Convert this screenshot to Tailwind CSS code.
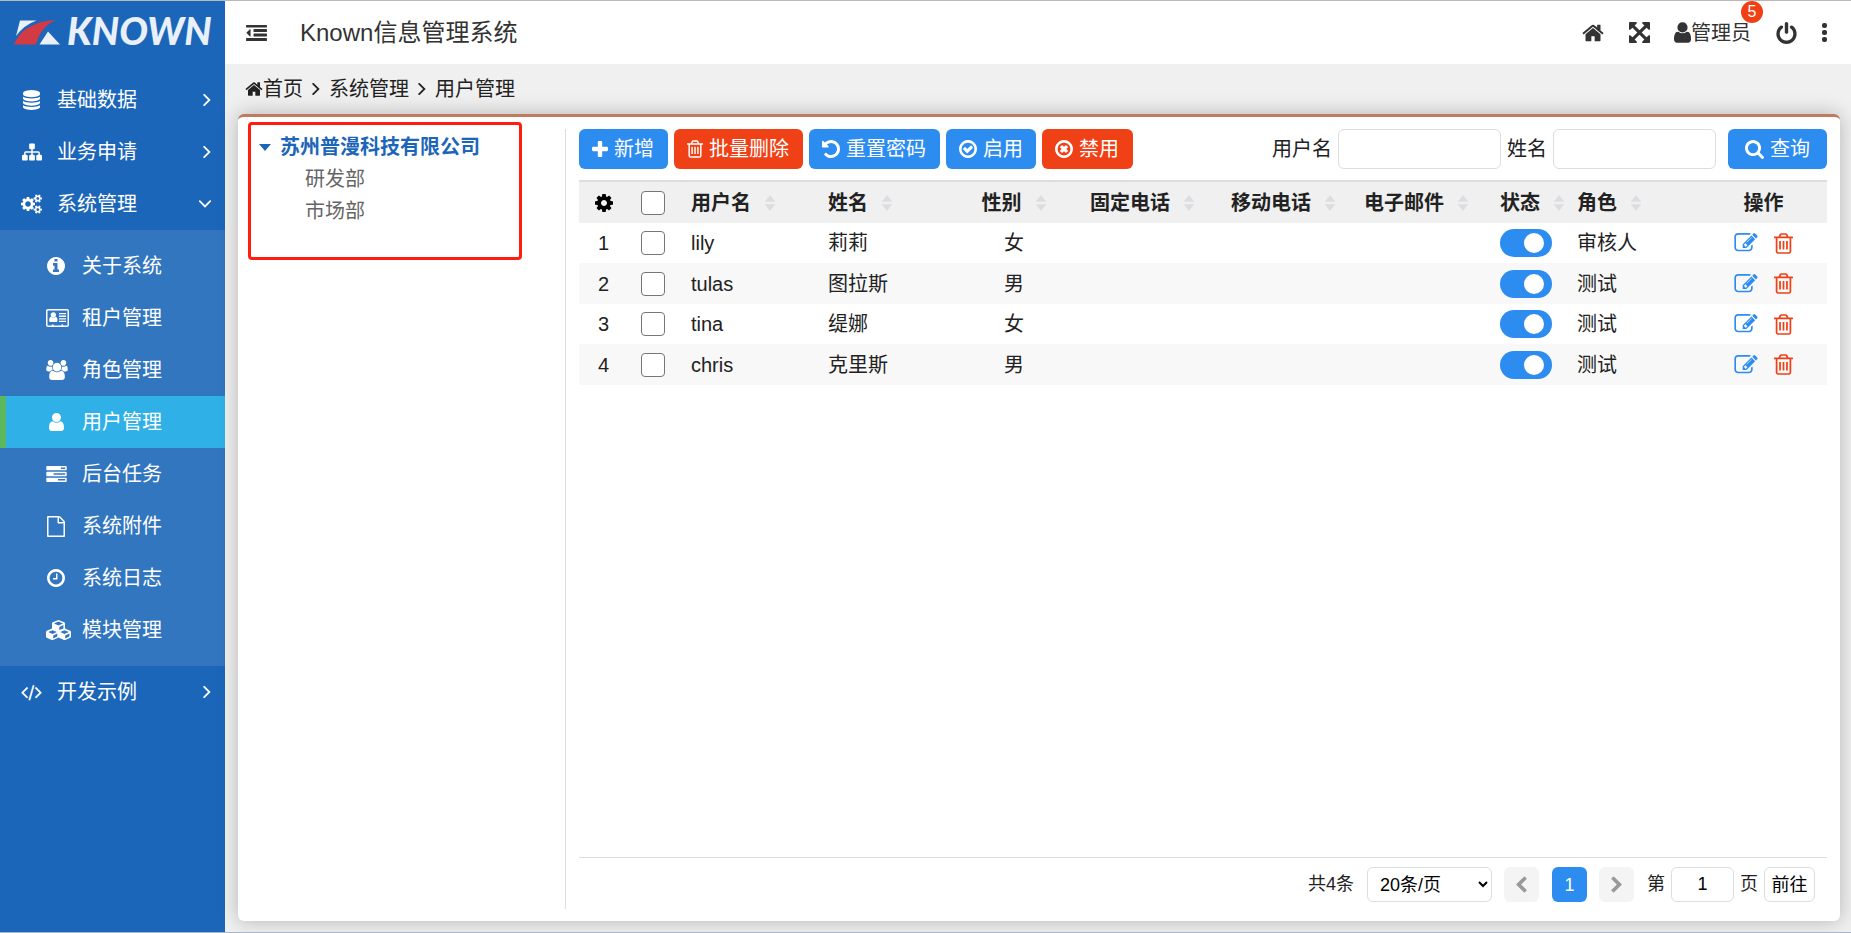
<!DOCTYPE html>
<html lang="zh-CN">
<head>
<meta charset="utf-8">
<title>Known信息管理系统</title>
<script src="https://cdn.jsdelivr.net/npm/@tailwindcss/browser@4"></script>
</head>
<body class="flex h-screen overflow-hidden border-t border-b border-t-[#b9b9b9] border-b-[#a9b6c6] bg-[#f0f0f0] font-['Liberation_Sans','Noto_Sans_CJK_SC',sans-serif] text-xl text-[#222]">

<svg class="hidden" aria-hidden="true">
  <symbol id="home" viewBox="64 128 1664 1536"><path d="M1472 992v480q0 26-19 45t-45 19h-384v-384h-256v384h-384q-26 0-45-19t-19-45v-480q0-1 .5-3t.5-3l575-474 575 474q1 2 1 6zm223-69l-62 74q-8 9-21 11h-3q-13 0-21-7l-692-577-692 577q-12 8-24 7-13-2-21-11l-62-74q-8-10-7-23.5t11-21.5l719-599q32-26 76-26t76 26l244 204v-195q0-14 9-23t23-9h192q14 0 23 9t9 23v408l219 182q10 8 11 21.5t-7 23.5z"/></symbol>
  <symbol id="expand" viewBox="128 128 1536 1536"><path d="M1411 541l-355 355 355 355 144-144q29-31 70-14 39 17 39 59v448q0 26-19 45t-45 19h-448q-42 0-59-40-17-39 14-69l144-144-355-355-355 355 144 144q31 30 14 69-17 40-59 40h-448q-26 0-45-19t-19-45v-448q0-42 40-59 39-17 69 14l144 144 355-355-355-355-144 144q-19 19-45 19-12 0-24-5-40-17-40-59v-448q0-26 19-45t45-19h448q42 0 59 40 17 39-14 69l-144 144 355 355 355-355-144-144q-31-30-14-69 17-40 59-40h448q26 0 45 19t19 45v448q0 42-39 59-13 5-25 5-26 0-45-19z"/></symbol>
  <symbol id="user" viewBox="256 128 1280 1536"><path d="M1536 1399q0 109-62.5 187t-150.5 78h-854q-88 0-150.5-78t-62.5-187q0-85 8.5-160.5t31.5-152 58.5-131 94-89 134.5-34.5q131 128 313 128t313-128q76 0 134.5 34.5t94 89 58.5 131 31.5 152 8.5 160.5zm-256-887q0 159-112.5 271.5t-271.5 112.5-271.5-112.5-112.5-271.5 112.5-271.5 271.5-112.5 271.5 112.5 112.5 271.5z"/></symbol>
  <symbol id="power" viewBox="128 0 1536 1664"><path d="M1664 896q0 156-61 298t-164 245-245 164-298 61-298-61-245-164-164-245-61-298q0-182 80.5-343t226.5-270q43-32 95.5-25t83.5 50q32 42 24.5 94.5t-49.5 84.5q-98 74-151.5 181t-53.5 228q0 104 40.5 198.5t109.5 163.5 163.5 109.5 198.5 40.5 198.5-40.5 163.5-109.5 109.5-163.5 40.5-198.5q0-121-53.5-228t-151.5-181q-42-32-49.5-84.5t24.5-94.5q31-43 84-50t95 25q146 109 226.5 270t80.5 343zm-640-768v640q0 52-38 90t-90 38-90-38-38-90v-640q0-52 38-90t90-38 90 38 38 90z"/></symbol>
  <symbol id="outdent" viewBox="0 160 1792 1376"><path d="M384 544v576q0 13-9.5 22.5t-22.5 9.5q-14 0-23-9l-288-288q-9-9-9-23t9-23l288-288q9-9 23-9 13 0 22.5 9.5t9.5 22.5zM32 1280h1728q32 0 32 32v192q0 32-32 32h-1728q-32 0-32-32v-192q0-32 32-32zM672 896h1088q32 0 32 32v192q0 32-32 32h-1088q-32 0-32-32v-192q0-32 32-32zM672 512h1088q32 0 32 32v192q0 32-32 32h-1088q-32 0-32-32v-192q0-32 32-32zM32 160h1728q32 0 32 32v160q0 32-32 32h-1728q-32 0-32-32v-160q0-32 32-32z"/></symbol>
  <symbol id="database" viewBox="128 0 1536 1792"><path d="M896 768q237 0 443-43t325-127v170q0 69-103 128t-280 93.5-385 34.5-385-34.5-280-93.5-103-128v-170q119 84 325 127t443 43zm0 768q237 0 443-43t325-127v170q0 69-103 128t-280 93.5-385 34.5-385-34.5-280-93.5-103-128v-170q119 84 325 127t443 43zm0-384q237 0 443-43t325-127v170q0 69-103 128t-280 93.5-385 34.5-385-34.5-280-93.5-103-128v-170q119 84 325 127t443 43zm0-1152q208 0 385 34.5t280 93.5 103 128v128q0 69-103 128t-280 93.5-385 34.5-385-34.5-280-93.5-103-128v-128q0-69 103-128t280-93.5 385-34.5z"/></symbol>
  <symbol id="sitemap" viewBox="0 0 1792 1792"><path d="M1792 1248v320q0 40-28 68t-68 28h-320q-40 0-68-28t-28-68v-320q0-40 28-68t68-28h96v-192h-512v192h96q40 0 68 28t28 68v320q0 40-28 68t-68 28h-320q-40 0-68-28t-28-68v-320q0-40 28-68t68-28h96v-192h-512v192h96q40 0 68 28t28 68v320q0 40-28 68t-68 28h-320q-40 0-68-28t-28-68v-320q0-40 28-68t68-28h96v-192q0-52 38-90t90-38h512v-192h-96q-40 0-68-28t-28-68v-320q0-40 28-68t68-28h320q40 0 68 28t28 68v320q0 40-28 68t-68 28h-96v192h512q52 0 90 38t38 90v192h96q40 0 68 28t28 68z"/></symbol>
  <symbol id="cogs" viewBox="0 0 1920 1792"><path d="M896 896q0-106-75-181t-181-75-181 75-75 181 75 181 181 75 181-75 75-181zm768 512q0-52-38-90t-90-38-90 38-38 90q0 53 37.5 90.5t90.5 37.5 90.5-37.5 37.5-90.5zm0-1024q0-52-38-90t-90-38-90 38-38 90q0 53 37.5 90.5t90.5 37.5 90.5-37.5 37.5-90.5zm-384 421v185q0 10-7 19.5t-16 10.5l-155 24q-11 35-32 76 34 48 90 115 7 11 7 20 0 12-7 19-23 30-82.5 89.5t-78.5 59.5q-11 0-21-7l-115-90q-37 19-77 31-11 108-23 155-7 24-30 24h-186q-11 0-20-7.5t-10-17.5l-23-153q-34-10-75-31l-118 89q-7 7-20 7-11 0-21-8-144-133-144-160 0-9 7-19 10-14 41-53t47-61q-23-44-35-82l-152-24q-10-1-17-9.5t-7-19.5v-185q0-10 7-19.5t16-10.5l155-24q11-35 32-76-34-48-90-115-7-11-7-20 0-12 7-20 22-30 82-89t79-59q11 0 21 7l115 90q34-18 77-32 11-108 23-154 7-24 30-24h186q11 0 20 7.5t10 17.5l23 153q34 10 75 31l118-89q8-7 20-7 11 0 21 8 144 133 144 160 0 8-7 19-12 16-42 54t-45 60q23 48 34 82l152 23q10 2 17 10.5t7 19.5zm640 533v140q0 16-149 31-12 27-30 52 51 113 51 138 0 4-4 7-122 71-124 71-8 0-46-47t-52-68q-20 2-30 2t-30-2q-14 21-52 68t-46 47q-2 0-124-71-4-3-4-7 0-25 51-138-18-25-30-52-149-15-149-31v-140q0-16 149-31 13-29 30-52-51-113-51-138 0-4 4-7 4-2 35-20t59-34 30-16q8 0 46 46.5t52 67.5q20-2 30-2t30 2q51-71 92-112l6-2q4 0 124 70 4 3 4 7 0 25-51 138 17 23 30 52 149 15 149 31zm0-1024v140q0 16-149 31-12 27-30 52 51 113 51 138 0 4-4 7-122 71-124 71-8 0-46-47t-52-68q-20 2-30 2t-30-2q-14 21-52 68t-46 47q-2 0-124-71-4-3-4-7 0-25 51-138-18-25-30-52-149-15-149-31v-140q0-16 149-31 13-29 30-52-51-113-51-138 0-4 4-7 4-2 35-20t59-34 30-16q8 0 46 46.5t52 67.5q20-2 30-2t30 2q51-71 92-112l6-2q4 0 124 70 4 3 4 7 0 25-51 138 17 23 30 52 149 15 149 31z"/></symbol>
  <symbol id="info" viewBox="128 128 1536 1536"><path d="M1152 1376v-160q0-14-9-23t-23-9h-96v-512q0-14-9-23t-23-9h-320q-14 0-23 9t-9 23v160q0 14 9 23t23 9h96v320h-96q-14 0-23 9t-9 23v160q0 14 9 23t23 9h448q14 0 23-9t9-23zm-128-896v-160q0-14-9-23t-23-9h-192q-14 0-23 9t-9 23v160q0 14 9 23t23 9h192q14 0 23-9t9-23zm640 416q0 209-103 385.5t-279.5 279.5-385.5 103-385.5-103-279.5-279.5-103-385.5 103-385.5 279.5-279.5 385.5-103 385.5 103 279.5 279.5 103 385.5z"/></symbol>
  <symbol id="idcard" viewBox="0 0 23 18"><path fill-rule="evenodd" d="M2 0h19a2 2 0 0 1 2 2v14a2 2 0 0 1-2 2H2a2 2 0 0 1-2-2V2a2 2 0 0 1 2-2zM1.500 2v14.200q0 .3.300.3H5.800v-1h1.800v1h7.800v-1h1.800v1h4q.3 0 .3-.3V2q0-.5-.5-.5H2q-.5 0-.5.5z"/><circle cx="7.300" cy="5.800" r="2.600"/><path d="M5.200 7.700q2.100 1.700 4.200 0 2.100.3 2.100 3.900 0 1.500-1.200 1.500H4.300q-1.200 0-1.200-1.500 0-3.600 2.100-3.900zM13 4h7v1.300h-7zM13 6.600h7v1.300h-7zM13 9.200h7v1.300h-7zM13 11.800h7v1.300h-7z"/></symbol>
  <symbol id="users" viewBox="-64 0 1920 1792"><path d="M529 896q-162 5-265 128h-134q-82 0-138-40.5t-56-118.5q0-353 124-353 6 0 43.5 21t97.5 42.500 119 21.500q67 0 133-23-5 37-5 66 0 139 81 256zm1071 637q0 120-73 189.500t-194 69.500h-874q-121 0-194-69.500t-73-189.500q0-53 3.500-103.500t14-109 26.500-108.500 43-97.500 62-81 85.500-53.500 111.500-20q10 0 43 21.500t73 48 107 48 135 21.500 135-21.500 107-48 73-48 43-21.500q61 0 111.500 20t85.500 53.500 62 81 43 97.500 26.500 108.500 14 109 3.500 103.500zm-1024-1277q0 106-75 181t-181 75-181-75-75-181 75-181 181-75 181 75 75 181zm704 384q0 159-112.500 271.500t-271.500 112.500-271.500-112.500-112.500-271.500 112.500-271.500 271.500-112.500 271.500 112.500 112.500 271.500zm576 225q0 78-56 118.500t-138 40.500h-134q-103-123-265-128 81-117 81-256 0-29-5-66 66 23 133 23 59 0 119-21.500t97.500-42.500 43.500-21q124 0 124 353zm-128-609q0 106-75 181t-181 75-181-75-75-181 75-181 181-75 181 75 75 181z"/></symbol>
  <symbol id="tasks" viewBox="0 128 1792 1408"><path fill-rule="evenodd" d="M1024 1408h640v-128h-640v128zm-384-512h1024v-128h-1024v128zm640-512h384v-128h-384v128zm512 832v256q0 26-19 45t-45 19h-1664q-26 0-45-19t-19-45v-256q0-26 19-45t45-19h1664q26 0 45 19t19 45zm0-512v256q0 26-19 45t-45 19h-1664q-26 0-45-19t-19-45v-256q0-26 19-45t45-19h1664q26 0 45 19t19 45zm0-512v256q0 26-19 45t-45 19h-1664q-26 0-45-19t-19-45v-256q0-26 19-45t45-19h1664q26 0 45 19t19 45z"/></symbol>
  <symbol id="file" viewBox="128 96 1536 1792"><path d="M1596 476q28 28 48 76t20 88v1152q0 40-28 68t-68 28h-1344q-40 0-68-28t-28-68v-1600q0-40 28-68t68-28h896q40 0 88 20t76 48zm-444-244v376h376q-10-29-22-41l-313-313q-12-12-41-22zm384 1528v-1024h-416q-40 0-68-28t-28-68v-416h-768v1536h1280z"/></symbol>
  <symbol id="clock" viewBox="128 128 1536 1536"><path d="M1024 544v448q0 14-9 23t-23 9h-320q-14 0-23-9t-9-23v-64q0-14 9-23t23-9h224v-352q0-14 9-23t23-9h64q14 0 23 9t9 23zm416 352q0-148-73-273t-198-198-273-73-273 73-198 198-73 273 73 273 198 198 273 73 273-73 198-198 73-273zm224 0q0 209-103 385.5t-279.5 279.5-385.5 103-385.5-103-279.5-279.5-103-385.5 103-385.5 279.5-279.5 385.5-103 385.5 103 279.5 279.5 103 385.5z"/></symbol>
  <symbol id="cubes" viewBox="0 0 25 20"><path fill-rule="evenodd" d="M12.500 0l5.700 2.300q.8.400.8 1.300v5l5.200 2.200q.8.400.8 1.200v4.500q0 .8-.7 1.200l-5.100 2.300q-.6.200-1.200 0l-5.500-2.400-5.500 2.400q-.6.200-1.200 0l-5.100-2.300q-.7-.4-.7-1.200V12q0-.8.800-1.200L6 8.600v-5q0-.9.800-1.300zM12.500 1.600L8 3.500l4.500 1.900L17 3.500zM13.300 6.900v3.200l4.100-1.700V5zM6.500 10.300L2.200 12.100l4.300 1.800 4.300-1.800zM7.200 15.400v3l4.100-1.800v-3zM18.500 10.300l-4.300 1.800 4.300 1.800 4.300-1.800zM19.200 15.400v3l4.200-1.800v-3z"/></symbol>
  <symbol id="code" viewBox="0 0 1920 1792"><path d="M617 1399l-50 50q-10 10-23 10t-23-10l-466-466q-10-10-10-23t10-23l466-466q10-10 23-10t23 10l50 50q10 10 10 23t-10 23l-393 393 393 393q10 10 10 23t-10 23zm591-1067l-373 1291q-4 13-15.500 19.500t-23.500 2.500l-62-17q-13-4-19.500-15.500t-2.500-24.500l373-1291q4-13 15.500-19.500t23.500-2.500l62 17q13 4 19.500 15.500t2.500 24.500zm657 651l-466 466q-10 10-23 10t-23-10l-50-50q-10-10-10-23t10-23l393-393-393-393q-10-10-10-23t10-23l50-50q10-10 23-10t23 10l466 466q10 10 10 23t-10 23z"/></symbol>
  <symbol id="plus" viewBox="192 128 1408 1408"><path d="M1600 736v192q0 40-28 68t-68 28h-416v416q0 40-28 68t-68 28h-192q-40 0-68-28t-28-68v-416h-416q-40 0-68-28t-28-68v-192q0-40 28-68t68-28h416v-416q0-40 28-68t68-28h192q40 0 68 28t28 68v416h416q40 0 68 28t28 68z"/></symbol>
  <symbol id="trash" viewBox="192 128 1408 1536"><path d="M704 736v576q0 14-9 23t-23 9h-64q-14 0-23-9t-9-23v-576q0-14 9-23t23-9h64q14 0 23 9t9 23zm256 0v576q0 14-9 23t-23 9h-64q-14 0-23-9t-9-23v-576q0-14 9-23t23-9h64q14 0 23 9t9 23zm256 0v576q0 14-9 23t-23 9h-64q-14 0-23-9t-9-23v-576q0-14 9-23t23-9h64q14 0 23 9t9 23zm128 724v-948h-896v948q0 22 7 40.5t14.5 27 10.5 8.5h832q3 0 10.5-8.5t14.5-27 7-40.5zm-672-1076h448l-48-117q-7-9-17-11h-317q-10 2-17 11zm928 32v64q0 14-9 23t-23 9h-96v948q0 83-47 143.5t-113 60.5h-832q-66 0-113-58.5t-47-141.5v-952h-96q-14 0-23-9t-9-23v-64q0-14 9-23t23-9h309l70-167q15-37 54-63t79-26h320q40 0 79 26t54 63l70 167h309q14 0 23 9t9 23z"/></symbol>
  <symbol id="undo" viewBox="128 128 1536 1536"><path d="M1664 896q0 156-61 298t-164 245-245 164-298 61q-172 0-327-72.500t-264-204.500q-7-10-6.500-22.500t8.500-20.500l137-138q10-9 25-9 16 2 23 12 73 95 179 147t225 52q104 0 198.500-40.500t163.500-109.500 109.500-163.500 40.500-198.500-40.500-198.500-109.500-163.500-163.500-109.500-198.500-40.500q-98 0-188 35.500t-160 101.500l137 138q31 30 14 69-17 40-59 40h-448q-26 0-45-19t-19-45v-448q0-42 40-59 39-17 69 14l130 129q107-101 244.500-156.500t284.500-55.500q156 0 298 61t245 164 164 245 61 298z"/></symbol>
  <symbol id="check" viewBox="128 128 1536 1536"><path d="M1299 813l-422 422q-19 19-45 19t-45-19l-294-294q-19-19-19-45t19-45l102-102q19-19 45-19t45 19l147 147 275-275q19-19 45-19t45 19l102 102q19 19 19 45t-19 45zm141 83q0-148-73-273t-198-198-273-73-273 73-198 198-73 273 73 273 198 198 273 73 273-73 198-198 73-273zm224 0q0 209-103 385.5t-279.5 279.5-385.5 103-385.5-103-279.5-279.5-103-385.5 103-385.5 279.5-279.5 385.5-103 385.5 103 279.5 279.5 103 385.5z"/></symbol>
  <symbol id="ban" viewBox="128 128 1536 1536"><path d="M1225 1079l-146 146q-10 10-23 10t-23-10l-137-137-137 137q-10 10-23 10t-23-10l-146-146q-10-10-10-23t10-23l137-137-137-137q-10-10-10-23t10-23l146-146q10-10 23-10t23 10l137 137 137-137q10-10 23-10t23 10l146 146q10 10 10 23t-10 23l-137 137 137 137q10 10 10 23t-10 23zm215-183q0-148-73-273t-198-198-273-73-273 73-198 198-73 273 73 273 198 198 273 73 273-73 198-198 73-273zm224 0q0 209-103 385.5t-279.5 279.5-385.5 103-385.5-103-279.5-279.5-103-385.5 103-385.5 279.5-279.5 385.5-103 385.5 103 279.5 279.5 103 385.5z"/></symbol>
  <symbol id="search" viewBox="64 128 1664 1664"><path d="M1216 832q0-185-131.5-316.5t-316.5-131.5-316.5 131.5-131.5 316.5 131.5 316.5 316.5 131.5 316.5-131.5 131.5-316.5zm512 832q0 52-38 90t-90 38q-54 0-90-38l-343-342q-179 124-399 124-143 0-273.5-55.5t-225-150-150-225-55.5-273.5 55.5-273.5 150-225 225-150 273.5-55.5 273.5 55.5 225 150 150 225 55.5 273.5q0 220-124 399l343 343q37 37 37 90z"/></symbol>
  <symbol id="cog" viewBox="128 128 1536 1536"><path d="M1152 896q0-106-75-181t-181-75-181 75-75 181 75 181 181 75 181-75 75-181zm512-109v222q0 12-8 23t-20 13l-185 28q-19 54-39 91 35 50 107 138 10 12 10 25t-9 23q-27 37-99 108t-94 71q-12 0-26-9l-138-108q-44 23-91 38-16 136-29 186-7 28-36 28h-222q-14 0-24.5-8.5t-11.500-21.500l-28-184q-49-16-90-37l-141 107q-10 9-25 9-14 0-25-11-126-114-165-168-7-10-7-23 0-12 8-23 15-21 51-66.500t54-70.500q-27-50-41-99l-183-27q-13-2-21-12.500t-8-23.500v-222q0-12 8-23t19-13l186-28q14-46 39-92-40-57-107-138-10-12-10-24 0-10 9-23 26-36 98.500-107.500t94.500-71.500q13 0 26 10l138 107q44-23 91-38 16-136 29-186 7-28 36-28h222q14 0 24.500 8.500t11.500 21.500l28 184q49 16 90 37l142-107q9-9 24-9 13 0 25 10 129 119 165 170 7 8 7 22 0 12-8 23-15 21-51 66.500t-54 70.500q26 50 41 98l183 28q13 2 21 12.500t8 23.500z"/></symbol>
  <symbol id="edit" viewBox="0 128 1792 1536"><path d="M888 1184l116-116-152-152-116 116v56h96v96h56zm440-720q-16-16-33 1l-350 350q-17 17-1 33t33-1l350-350q17-17 1-33zm80 594v190q0 119-84.500 203.500t-203.500 84.500h-832q-119 0-203.500-84.500t-84.500-203.500v-832q0-119 84.500-203.500t203.500-84.500h832q63 0 117 25 15 7 18 23 3 17-9 29l-49 49q-14 14-32 8-23-6-45-6h-832q-66 0-113 47t-47 113v832q0 66 47 113t113 47h832q66 0 113-47t47-113v-126q0-13 9-22l64-64q15-15 35-7t20 29zm-96-738l288 288-672 672h-288v-288zm444 132l-92 92-288-288 92-92q28-28 68-28t68 28l152 152q28 28 28 68t-28 68z"/></symbol>
  <symbol id="prev" viewBox="380 0 1100 1664"><path d="M1427 301l-531 531 531 531q19 19 19 45t-19 45l-166 166q-19 19-45 19t-45-19l-742-742q-19-19-19-45t19-45l742-742q19-19 45-19t45 19l166 166q19 19 19 45t-19 45z"/></symbol>
  <symbol id="angle" viewBox="0 0 8 12"><path d="M1.200 .8l5.200 5.200-5.200 5.200" fill="none" stroke="currentColor" stroke-width="1.800" stroke-linecap="round"/></symbol>
  <symbol id="sort" viewBox="0 0 12 18"><path d="M6 0l6 7.500H0zM6 18l6-7.500H0z"/></symbol>
</svg>

<aside class="flex w-[225px] shrink-0 flex-col bg-[#1c66b9] text-white">
  <a href="#" class="flex h-[73px] items-start gap-1.5 pt-1.5 pl-3.5">
    <svg class="mt-3 h-[27px] w-[47px]" viewBox="0 0 47 27" aria-hidden="true">
      <path fill="#e9f0fa" d="M6 1.500h16.500Q10 6 2 17zM34 12.500l12 13H25.500z"/>
      <path fill="#d33a44" d="M0 25.500Q9 3 42 1 27 7 22 25.500z"/>
    </svg>
    <span class="font-['Lato'] text-[38px] leading-[46px] font-black text-[#e9f0fa] italic">KNOWN</span>
  </a>
  <nav class="flex flex-col">
    <a href="#" class="flex h-[52px] items-center gap-[15px] pr-3.5 pl-[21px]"><span class="flex w-[21px] justify-center"><svg class="h-5 w-[17px] fill-current"><use href="#database"/></svg></span><span class="flex-1">基础数据</span><svg class="h-3 w-2"><use href="#angle"/></svg></a>
    <a href="#" class="flex h-[52px] items-center gap-[15px] pr-3.5 pl-[21px]"><span class="flex w-[21px] justify-center"><svg class="size-5 fill-current"><use href="#sitemap"/></svg></span><span class="flex-1">业务申请</span><svg class="h-3 w-2"><use href="#angle"/></svg></a>
    <a href="#" class="flex h-[52px] items-center gap-[15px] pr-3.5 pl-[21px]"><span class="flex w-[21px] justify-center"><svg class="h-5 w-[21px] fill-current"><use href="#cogs"/></svg></span><span class="flex-1">系统管理</span><svg class="h-3 w-3 rotate-90"><use href="#angle"/></svg></a>
    <div class="flex flex-col bg-[#3176bf] py-2.5">
      <a href="#" class="flex h-[52px] items-center gap-4 pl-[46px]"><span class="flex w-5 justify-center"><svg class="size-[18px] shrink-0 fill-current"><use href="#info"/></svg></span>关于系统</a>
      <a href="#" class="flex h-[52px] items-center gap-4 pl-[46px]"><span class="flex w-5"><svg class="h-[18px] w-[23px] shrink-0 fill-current"><use href="#idcard"/></svg></span>租户管理</a>
      <a href="#" class="flex h-[52px] items-center gap-4 pl-[46px]"><span class="flex w-5"><svg class="h-5 w-[22px] shrink-0 fill-current"><use href="#users"/></svg></span>角色管理</a>
      <a href="#" class="flex h-[52px] items-center gap-4 border-l-6 border-[#5cb85c] bg-[#2fb1e8] pl-10" aria-current="page"><span class="flex w-5 justify-center"><svg class="h-[18px] w-[15px] shrink-0 fill-current"><use href="#user"/></svg></span>用户管理</a>
      <a href="#" class="flex h-[52px] items-center gap-4 pl-[46px]"><span class="flex w-5"><svg class="h-4 w-[21px] shrink-0 fill-current"><use href="#tasks"/></svg></span>后台任务</a>
      <a href="#" class="flex h-[52px] items-center gap-4 pl-[46px]"><span class="flex w-5 justify-center"><svg class="h-[21px] w-[18px] shrink-0 fill-current"><use href="#file"/></svg></span>系统附件</a>
      <a href="#" class="flex h-[52px] items-center gap-4 pl-[46px]"><span class="flex w-5 justify-center"><svg class="size-[18px] shrink-0 fill-current"><use href="#clock"/></svg></span>系统日志</a>
      <a href="#" class="flex h-[52px] items-center gap-4 pl-[46px]"><span class="flex w-5"><svg class="h-5 w-[25px] shrink-0 fill-current"><use href="#cubes"/></svg></span>模块管理</a>
    </div>
    <a href="#" class="flex h-[52px] items-center gap-[15px] pr-3.5 pl-[21px]"><span class="flex w-[21px] justify-center"><svg class="h-5 w-[21px] fill-current stroke-current stroke-[40]"><use href="#code"/></svg></span><span class="flex-1">开发示例</span><svg class="h-3 w-2"><use href="#angle"/></svg></a>
  </nav>
</aside>

<div class="flex min-w-0 flex-1 flex-col">
  <header class="flex h-[63px] shrink-0 items-center bg-white pr-6 pl-[21px] text-[#333]">
    <button aria-label="收起菜单"><svg class="h-4 w-[21px] fill-current"><use href="#outdent"/></svg></button>
    <h1 class="ml-[33px] flex-1 text-2xl">Known信息管理系统</h1>
    <div class="flex items-center">
      <a href="#" aria-label="首页"><svg class="h-5 w-[22px] fill-current"><use href="#home"/></svg></a>
      <button class="ml-[25px]" aria-label="全屏"><svg class="size-[21px] fill-current"><use href="#expand"/></svg></button>
      <a href="#" class="relative ml-6 flex items-center"><svg class="h-[21px] w-[17px] fill-current"><use href="#user"/></svg>管理员<span class="absolute -top-[18px] -right-3 flex size-[22px] items-center justify-center rounded-full bg-[#ef4016] text-base text-white">5</span></a>
      <button class="ml-[25px]" aria-label="退出"><svg class="h-[22px] w-[21px] fill-current"><use href="#power"/></svg></button>
      <button class="ml-[25px] flex flex-col gap-0.5" aria-label="更多"><span class="size-[5px] rounded-xs bg-current"></span><span class="size-[5px] rounded-xs bg-current"></span><span class="size-[5px] rounded-xs bg-current"></span></button>
    </div>
  </header>

  <nav class="flex h-[50px] shrink-0 items-center pl-5" aria-label="当前位置">
    <a href="#" class="flex items-center"><svg class="h-4 w-[18px] fill-current"><use href="#home"/></svg>首页</a>
    <svg class="mx-[9px] h-3 w-2"><use href="#angle"/></svg>
    <a href="#">系统管理</a>
    <svg class="mx-[9px] h-3 w-2"><use href="#angle"/></svg>
    <span>用户管理</span>
  </nav>

  <main class="mr-[11px] mb-[11px] ml-[13px] flex min-h-0 flex-1 rounded-md border-t-3 border-[#bf7a5f] bg-white pt-[5px] pr-[13px] shadow-[0_0_20px_rgba(0,0,0,0.25)]">
    <section class="w-[327px] shrink-0 pl-2.5">
      <div class="h-[138px] w-[274px] rounded-sm border-3 border-[#ff1d12] px-2 pt-1.5">
        <a href="#" class="flex h-8 items-center gap-[9px] font-bold text-[#1c66b9]"><svg class="h-[7px] w-3 fill-current" viewBox="0 0 12 7"><path d="M0 0h12l-6 7z"/></svg>苏州普漫科技有限公司</a>
        <a href="#" class="flex h-8 items-center pl-[46px] text-[#666]">研发部</a>
        <a href="#" class="flex h-8 items-center pl-[46px] text-[#666]">市场部</a>
      </div>
    </section>

    <section class="mt-[7px] mb-3 flex min-w-0 flex-1 flex-col border-l border-[#dcdde0] pl-[13px]">
      <div class="flex h-10 shrink-0 items-center gap-1.5 text-white">
        <button class="flex h-10 items-center gap-1.5 rounded-md bg-[#2d8cf0] pr-3.5 pl-[13px]"><svg class="size-4 fill-current"><use href="#plus"/></svg>新增</button>
        <button class="flex h-10 items-center gap-1.5 rounded-md bg-[#ef4016] pr-3.5 pl-[13px]"><svg class="h-[18px] w-4 fill-current"><use href="#trash"/></svg>批量删除</button>
        <button class="flex h-10 items-center gap-1.5 rounded-md bg-[#2d8cf0] pr-3.5 pl-[13px]"><svg class="size-[18px] fill-current"><use href="#undo"/></svg>重置密码</button>
        <button class="flex h-10 items-center gap-1.5 rounded-md bg-[#2d8cf0] px-[13px]"><svg class="size-[18px] fill-current"><use href="#check"/></svg>启用</button>
        <button class="flex h-10 items-center gap-1.5 rounded-md bg-[#ef4016] pr-3.5 pl-[13px]"><svg class="size-[18px] fill-current"><use href="#ban"/></svg>禁用</button>
        <form class="ml-auto flex items-center gap-1.5 text-[#222]">
          <label for="q-user">用户名</label>
          <input id="q-user" type="text" class="h-10 w-[163px] rounded-md border border-[#dcdde0] px-2">
          <label for="q-name">姓名</label>
          <input id="q-name" type="text" class="h-10 w-[163px] rounded-md border border-[#dcdde0] px-2">
          <button type="button" class="ml-1.5 flex h-10 items-center gap-1.5 rounded-md bg-[#2d8cf0] px-[17px] text-white"><svg class="size-[19px] fill-current"><use href="#search"/></svg>查询</button>
        </form>
      </div>

      <div class="mt-[11px] min-h-0 flex-1">
        <table class="w-full table-fixed border-t-2 border-[#dcdde0] text-left">
          <colgroup><col class="w-[49px]"><col class="w-[50px]"><col class="w-[142px]"><col class="w-[126px]"><col class="w-[136px]"><col class="w-[141px]"><col class="w-[133px]"><col class="w-[136px]"><col class="w-[77px]"><col class="w-[131px]"><col class="w-[127px]"></colgroup>
          <thead class="bg-[#f0f0f0]">
            <tr class="h-[42px] whitespace-nowrap">
              <th><button class="flex w-full justify-center text-black" aria-label="列设置"><svg class="size-[18px] fill-current"><use href="#cog"/></svg></button></th>
              <th><input type="checkbox" aria-label="全选" class="mx-auto block size-6 appearance-none rounded border border-[#767676] bg-white"></th>
              <th class="pl-[13px]"><span class="flex items-center gap-[13px]">用户名<svg class="h-4 w-3 fill-[#dcdde0]"><use href="#sort"/></svg></span></th>
              <th class="px-2"><span class="flex items-center gap-[13px]">姓名<svg class="h-4 w-3 fill-[#dcdde0]"><use href="#sort"/></svg></span></th>
              <th class="px-2"><span class="flex items-center justify-center gap-[13px]">性别<svg class="h-4 w-3 fill-[#dcdde0]"><use href="#sort"/></svg></span></th>
              <th class="px-2"><span class="flex items-center gap-[13px]">固定电话<svg class="h-4 w-3 fill-[#dcdde0]"><use href="#sort"/></svg></span></th>
              <th class="px-2"><span class="flex items-center gap-[13px]">移动电话<svg class="h-4 w-3 fill-[#dcdde0]"><use href="#sort"/></svg></span></th>
              <th class="px-2"><span class="flex items-center gap-[13px]">电子邮件<svg class="h-4 w-3 fill-[#dcdde0]"><use href="#sort"/></svg></span></th>
              <th class="pl-2"><span class="flex items-center gap-[13px]">状态<svg class="h-4 w-3 fill-[#dcdde0]"><use href="#sort"/></svg></span></th>
              <th class="px-2"><span class="flex items-center gap-[13px]">角色<svg class="h-4 w-3 fill-[#dcdde0]"><use href="#sort"/></svg></span></th>
              <th class="text-center">操作</th>
            </tr>
          </thead>
          <tbody>
            <tr class="h-10">
              <td class="text-center">1</td>
              <td><input type="checkbox" aria-label="选择 lily" class="mx-auto block size-6 appearance-none rounded border border-[#767676] bg-white"></td>
              <td class="pl-[13px]">lily</td><td class="px-2">莉莉</td><td class="text-center">女</td><td></td><td></td><td></td>
              <td class="pl-2"><input type="checkbox" role="switch" checked aria-label="状态 lily" class="flex h-7 w-[52px] appearance-none items-center justify-end rounded-full bg-[#2d8cf0] pr-2 before:size-5 before:rounded-full before:bg-white"></td>
              <td class="px-2">审核人</td>
              <td><div class="flex justify-center gap-4"><button aria-label="编辑" class="text-[#2d8cf0]"><svg class="h-5 w-6 fill-current"><use href="#edit"/></svg></button><button aria-label="删除" class="text-[#ef4016]"><svg class="h-[21px] w-[19px] fill-current"><use href="#trash"/></svg></button></div></td>
            </tr>
            <tr class="h-[41px] bg-[#f8f8f8]">
              <td class="text-center">2</td>
              <td><input type="checkbox" aria-label="选择 tulas" class="mx-auto block size-6 appearance-none rounded border border-[#767676] bg-white"></td>
              <td class="pl-[13px]">tulas</td><td class="px-2">图拉斯</td><td class="text-center">男</td><td></td><td></td><td></td>
              <td class="pl-2"><input type="checkbox" role="switch" checked aria-label="状态 tulas" class="flex h-7 w-[52px] appearance-none items-center justify-end rounded-full bg-[#2d8cf0] pr-2 before:size-5 before:rounded-full before:bg-white"></td>
              <td class="px-2">测试</td>
              <td><div class="flex justify-center gap-4"><button aria-label="编辑" class="text-[#2d8cf0]"><svg class="h-5 w-6 fill-current"><use href="#edit"/></svg></button><button aria-label="删除" class="text-[#ef4016]"><svg class="h-[21px] w-[19px] fill-current"><use href="#trash"/></svg></button></div></td>
            </tr>
            <tr class="h-10">
              <td class="text-center">3</td>
              <td><input type="checkbox" aria-label="选择 tina" class="mx-auto block size-6 appearance-none rounded border border-[#767676] bg-white"></td>
              <td class="pl-[13px]">tina</td><td class="px-2">缇娜</td><td class="text-center">女</td><td></td><td></td><td></td>
              <td class="pl-2"><input type="checkbox" role="switch" checked aria-label="状态 tina" class="flex h-7 w-[52px] appearance-none items-center justify-end rounded-full bg-[#2d8cf0] pr-2 before:size-5 before:rounded-full before:bg-white"></td>
              <td class="px-2">测试</td>
              <td><div class="flex justify-center gap-4"><button aria-label="编辑" class="text-[#2d8cf0]"><svg class="h-5 w-6 fill-current"><use href="#edit"/></svg></button><button aria-label="删除" class="text-[#ef4016]"><svg class="h-[21px] w-[19px] fill-current"><use href="#trash"/></svg></button></div></td>
            </tr>
            <tr class="h-[41px] bg-[#f8f8f8]">
              <td class="text-center">4</td>
              <td><input type="checkbox" aria-label="选择 chris" class="mx-auto block size-6 appearance-none rounded border border-[#767676] bg-white"></td>
              <td class="pl-[13px]">chris</td><td class="px-2">克里斯</td><td class="text-center">男</td><td></td><td></td><td></td>
              <td class="pl-2"><input type="checkbox" role="switch" checked aria-label="状态 chris" class="flex h-7 w-[52px] appearance-none items-center justify-end rounded-full bg-[#2d8cf0] pr-2 before:size-5 before:rounded-full before:bg-white"></td>
              <td class="px-2">测试</td>
              <td><div class="flex justify-center gap-4"><button aria-label="编辑" class="text-[#2d8cf0]"><svg class="h-5 w-6 fill-current"><use href="#edit"/></svg></button><button aria-label="删除" class="text-[#ef4016]"><svg class="h-[21px] w-[19px] fill-current"><use href="#trash"/></svg></button></div></td>
            </tr>
          </tbody>
        </table>
      </div>

      <footer class="flex h-[52px] shrink-0 items-start justify-end border-t border-[#dcdde0] pt-[9px] pr-3 text-lg">
        <span class="mr-[13px] leading-[35px]">共4条</span>
        <select aria-label="每页条数" class="h-[35px] w-[125px] rounded-md border border-[#dcdde0] bg-white pl-2 text-black"><option>20条/页</option></select>
        <button aria-label="上一页" class="ml-3 flex size-[35px] items-center justify-center rounded-md bg-[#f4f4f4] text-[#999]"><svg class="h-[17px] w-[11px] fill-current"><use href="#prev"/></svg></button>
        <button class="ml-[13px] size-[35px] rounded-md bg-[#2d8cf0] text-white">1</button>
        <button aria-label="下一页" class="ml-3 flex size-[35px] items-center justify-center rounded-md bg-[#f4f4f4] text-[#999]"><svg class="h-[17px] w-[11px] rotate-180 fill-current"><use href="#prev"/></svg></button>
        <label for="page" class="ml-[13px] leading-[35px]">第</label>
        <input id="page" type="text" value="1" class="mx-1.5 h-[35px] w-[63px] rounded-md border border-[#dcdde0] text-center text-black">
        <span class="leading-[35px]">页</span>
        <button class="ml-1.5 h-[35px] w-[51px] rounded-md border border-[#dcdde0] text-black">前往</button>
      </footer>
    </section>
  </main>
</div>
</body>
</html>
